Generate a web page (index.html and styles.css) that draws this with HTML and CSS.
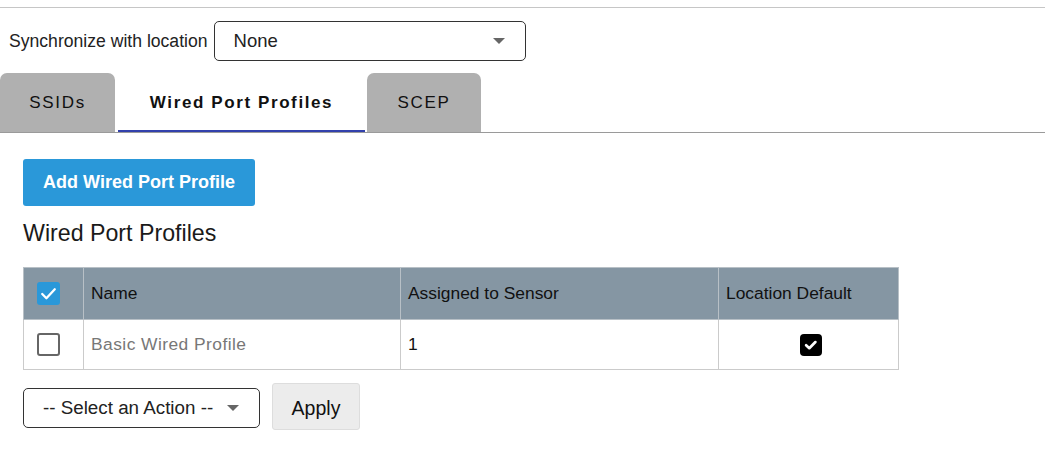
FILE: index.html
```html
<!DOCTYPE html>
<html lang="en">

<head>
    <meta charset="UTF-8">
    <meta name="viewport" content="width=device-width, initial-scale=1.0">
    <title>Wired Port Profiles</title>
    <link rel="stylesheet" href="styles.css">
</head>

<body>
    <div class="top-rule"></div>

    <!-- Location sync -->
    <div class="sync-row">
        <label for="syncLocation">Synchronize with location</label>
        <div class="dropdown sync-select" id="syncLocation">
            <span>None</span>
            <span class="caret"></span>
        </div>
    </div>

    <!-- Tabs -->
    <div class="tabs">
        <div class="tab">SSIDs</div>
        <div class="tab active">Wired Port Profiles</div>
        <div class="tab">SCEP</div>
    </div>

    <div class="content">
        <button class="btn-primary">Add Wired Port Profile</button>
        <h2>Wired Port Profiles</h2>

        <table class="profiles">
            <thead>
                <tr>
                    <th class="col-check"><span class="check blue"><svg viewBox="0 0 22 22"><path d="M5 11.5l4 4 8-8.5" /></svg></span></th>
                    <th class="col-name">Name</th>
                    <th class="col-sensor">Assigned to Sensor</th>
                    <th class="col-default">Location Default</th>
                </tr>
            </thead>
            <tbody>
                <tr>
                    <td class="col-check"><span class="check empty"></span></td>
                    <td class="muted">Basic Wired Profile</td>
                    <td>1</td>
                    <td class="center"><span class="check black"><svg viewBox="0 0 18 18"><path d="M5 9.2l2.6 2.4 5-5" /></svg></span></td>
                </tr>
            </tbody>
        </table>

        <div class="actions">
            <div class="dropdown action-select">
                <span>-- Select an Action --</span>
                <span class="caret"></span>
            </div>
            <button class="btn-apply">Apply</button>
        </div>
    </div>
</body>

</html>
```

FILE: styles.css
```css
* {
    margin: 0;
    padding: 0;
    box-sizing: border-box;
}

body {
    font-family: 'Liberation Sans', Arial, sans-serif;
    color: #222;
    background: #fff;
    width: 1045px;
    height: 463px;
    overflow: hidden;
}

.top-rule {
    margin-top: 7px;
    border-top: 1px solid #c6c6c6;
}

.sync-row {
    display: flex;
    align-items: center;
    padding-left: 9px;
    margin-top: 13px;
    font-size: 17.6px;
    color: #222;
}

.dropdown {
    display: flex;
    align-items: center;
    justify-content: space-between;
    border: 1px solid #333;
    border-radius: 5px;
    background: #fff;
    color: #222;
}

.sync-select {
    width: 312px;
    height: 40px;
    margin-left: 6px;
    padding: 0 20px 0 19px;
    font-size: 18.5px;
}

.caret {
    width: 0;
    height: 0;
    border-left: 6px solid transparent;
    border-right: 6px solid transparent;
    border-top: 6px solid #666;
}

.tabs {
    display: flex;
    margin-top: 12px;
    border-bottom: 1px solid #9a9a9a;
    height: 60px;
}

.tab {
    height: 59px;
    display: flex;
    align-items: center;
    justify-content: center;
    background: #b0b0b0;
    border-radius: 7px 7px 0 0;
    font-size: 17px;
    letter-spacing: 1.7px;
    color: #111;
}

.tab:nth-child(1) {
    width: 115px;
}

.tab:nth-child(3) {
    width: 114px;
    margin-left: 2px;
}

.tab.active {
    width: 247px;
    margin-left: 3px;
    background: #fff;
    border-radius: 0;
    font-weight: bold;
    letter-spacing: 1.6px;
    border-bottom: 2px solid #3241ac;
    padding-top: 2px;
}

.content {
    padding: 26px 0 0 23px;
}

.btn-primary {
    height: 47px;
    width: 232px;
    border: none;
    border-radius: 3px;
    background: #2a98d9;
    color: #fff;
    font-family: inherit;
    font-size: 18px;
    font-weight: bold;
}

h2 {
    margin-top: 15px;
    font-size: 23.2px;
    font-weight: 500;
    color: #1a1a1a;
    line-height: 24px;
}

.profiles {
    margin-top: 22px;
    width: 876px;
    border-collapse: collapse;
    font-size: 17.4px;
}

.profiles th,
.profiles td {
    border: 1px solid #cbcbcb;
    text-align: left;
    padding: 0 7px;
}

.profiles th {
    background: #8596a3;
    font-weight: normal;
    color: #111;
    height: 52px;
    border-color: #b8c0c6;
}

.profiles td {
    height: 50px;
    color: #111;
}

.profiles .col-check {
    width: 60px;
    padding: 0 0 0 13px;
}

.profiles .col-name {
    width: 317px;
}

.profiles .col-sensor {
    width: 318px;
}

.profiles td.muted {
    color: #777;
    letter-spacing: 0.45px;
}

.profiles td.center {
    text-align: center;
    padding-left: 11px;
}

.check {
    display: inline-block;
    vertical-align: middle;
    border-radius: 3px;
}

.check svg {
    display: block;
    width: 100%;
    height: 100%;
    fill: none;
    stroke: #fff;
    stroke-linecap: round;
    stroke-linejoin: round;
}

.check.blue {
    width: 23px;
    height: 23px;
    background: #2a98d9;
}

.check.blue svg {
    stroke-width: 2.2;
}

.check.empty {
    width: 23px;
    height: 23px;
    border: 2px solid #666;
    background: #fff;
}

.check.black {
    width: 22px;
    height: 22px;
    background: #000;
    border-radius: 4px;
}

.check.black svg {
    stroke-width: 2.2;
}

.actions {
    display: flex;
    align-items: center;
    gap: 12px;
    margin-top: 13px;
}

.action-select {
    width: 237px;
    height: 40px;
    padding: 0 20px 0 19px;
    border-radius: 5px;
    font-size: 18.8px;
    margin-top: 3px;
}

.btn-apply {
    width: 88px;
    height: 47px;
    border: 1px solid #ddd;
    border-radius: 3px;
    background: #ececec;
    color: #111;
    font-family: inherit;
    font-size: 19.5px;
    padding-top: 3px;
}
```
